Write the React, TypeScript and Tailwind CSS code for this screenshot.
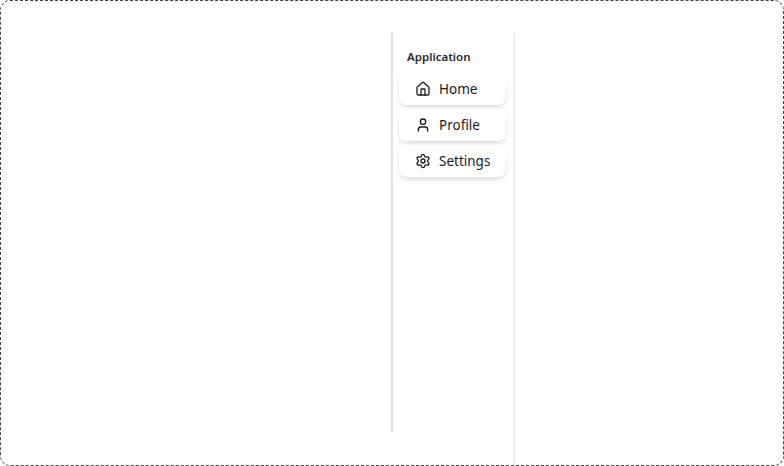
import { Home, User, Settings } from 'lucide-react'

const items = [
  { label: 'Home', icon: Home },
  { label: 'Profile', icon: User },
  { label: 'Settings', icon: Settings },
]

export default function App() {
  return (
    <div className="w-[784px] h-[466px] bg-white overflow-hidden rounded-[10px] border border-dashed border-[#444] font-['Noto_Sans',sans-serif] text-[#1c1c1c]">
      <div className="flex h-full pl-[390px] pt-[32px]">
        <div className="w-[2px] h-[399px] bg-[#e2e2e2]" />
        <aside className="w-[122px] border-r border-[#e4e4e4] h-[500px] pl-[6px] pr-[8px]">
          <div className="h-[40px] px-[8px] pt-[15px] text-[11.5px] leading-[18px] font-semibold text-[#2a2a2a]">Application</div>
          <nav className="flex flex-col gap-[4px]">
            {items.map(({ label, icon: Icon }) => (
              <a key={label} className="flex items-center gap-[8px] h-[32px] pl-[16px] rounded-lg bg-white shadow-md text-[13.5px]">
                <Icon size={16} strokeWidth={2} />
                <span>{label}</span>
              </a>
            ))}
          </nav>
        </aside>
      </div>
    </div>
  )
}
